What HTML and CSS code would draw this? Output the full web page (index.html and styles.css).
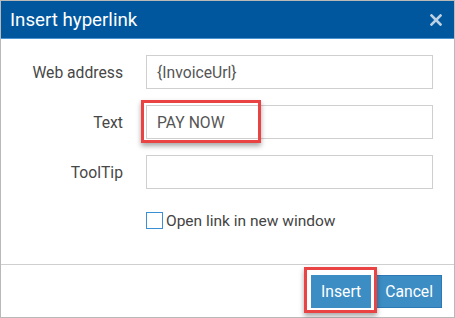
FILE: index.html
```html
<!DOCTYPE html>
<html>
<head>
<meta charset="utf-8">
<link rel="stylesheet" href="styles.css">
</head>
<body>
<div class="dialog">
  <div class="titlebar">
    <span class="title">Insert hyperlink</span>
    <span class="close" aria-label="Close">
      <svg width="12" height="12" viewBox="0 0 12 12"><path d="M1.5 1.5 L10.5 10.5 M10.5 1.5 L1.5 10.5" stroke="#bcd0e4" stroke-width="2.6" stroke-linecap="square"/></svg>
    </span>
  </div>
  <div class="body">
    <div class="form">
      <label class="label">Web address</label>
      <div class="field">{InvoiceUrl}</div>
      <label class="label">Text</label>
      <div class="field">PAY NOW</div>
      <label class="label">ToolTip</label>
      <div class="field"></div>
      <div class="spacer"></div>
      <div class="check-row">
        <span class="checkbox"></span>
        <span class="check-label">Open link in new window</span>
      </div>
    </div>
  </div>
  <div class="footer">
    <button class="btn">Insert</button>
    <button class="btn btn-cancel">Cancel</button>
  </div>
  <div class="highlight hl-text"></div>
  <div class="highlight hl-insert"></div>
</div>
</body>
</html>
```

FILE: styles.css
```css
* { box-sizing: border-box; }
html, body { margin: 0; padding: 0; background: #fff; }
body { font-family: Roboto, "Liberation Sans", Arial, sans-serif; }

.dialog {
  position: relative;
  width: 455px;
  height: 318px;
  border: 1px solid #b9b9b9;
  background: #fff;
  display: flex;
  flex-direction: column;
}

.titlebar {
  height: 38px;
  background: #00579e;
  border-bottom: 1px solid #4c93d2;
  display: flex;
  align-items: center;
  justify-content: space-between;
  padding: 0 12px 0 9px;
  flex-shrink: 0;
}
.title {
  color: #fff;
  font-size: 18.7px;
  font-weight: 400;
  margin-top: 1px;
}
.close {
  display: flex;
  width: 12px;
  height: 12px;
}

.body {
  padding: 16px 21px 0 0;
  height: 225px;
  flex-shrink: 0;
}
.form {
  display: grid;
  grid-template-columns: 122px 287px;
  column-gap: 23px;
  row-gap: 16px;
  align-items: center;
}
.label {
  text-align: right;
  font-size: 15.7px;
  color: #474747;
}
.field {
  height: 34px;
  border: 1px solid #cfcfcf;
  padding: 0 10px;
  display: flex;
  align-items: center;
  font-size: 15.7px;
  color: #555;
}
.spacer { height: 17px; }
.check-row {
  display: flex;
  align-items: center;
  gap: 3px;
  margin-top: 7px;
  height: 17px;
}
.checkbox {
  width: 17px;
  height: 17px;
  border: 1px solid #3b8fd4;
  background: #fff;
  flex-shrink: 0;
}
.check-label {
  font-size: 15.5px;
  color: #444;
}

.footer {
  flex: 1;
  border-top: 1px solid #cfcfcf;
  display: flex;
  justify-content: flex-end;
  align-items: center;
  gap: 5px;
  padding: 0 12px 0 0;
}
.btn {
  height: 33px;
  padding: 0 9px;
  background: #3c8dc4;
  border: 1px solid #3c8dc4;
  color: #fff;
  font-family: Roboto, "Liberation Sans", Arial, sans-serif;
  font-size: 15.7px;
}
.btn-cancel {
  border-color: #2d79b6;
  padding: 0 8px;
}

.highlight {
  position: absolute;
  border: 3px solid #ea4343;
  box-shadow: 0 3px 5px rgba(0,0,0,0.35);
}
.hl-text { left: 140px; top: 99px; width: 120px; height: 43px; }
.hl-insert { left: 303px; top: 266px; width: 73px; height: 46px; }
```
